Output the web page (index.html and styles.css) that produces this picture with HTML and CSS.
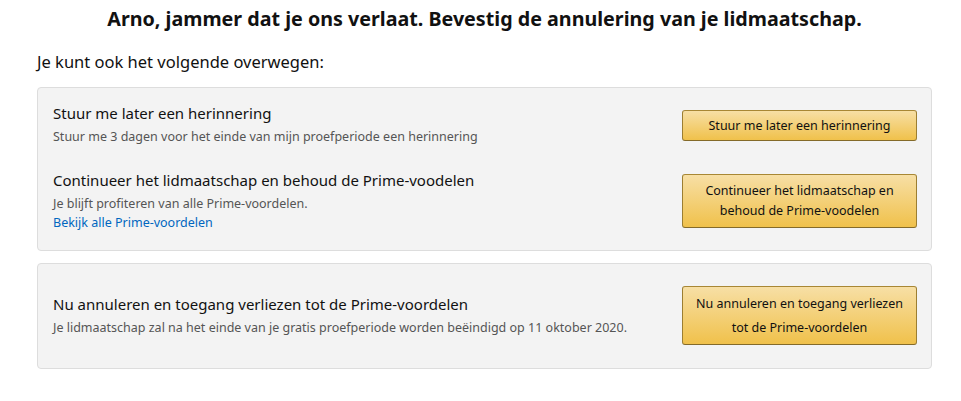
FILE: index.html
```html
<!DOCTYPE html>
<html lang="nl">
<head>
<meta charset="utf-8">
<link rel="stylesheet" href="styles.css">
</head>
<body>
<div class="page">
  <h1 class="title">Arno, jammer dat je ons verlaat. Bevestig de annulering van je lidmaatschap.</h1>
  <p class="intro">Je kunt ook het volgende overwegen:</p>
  <div class="box">
    <div class="row">
      <div class="text">
        <div class="head">Stuur me later een herinnering</div>
        <div class="sub">Stuur me 3 dagen voor het einde van mijn proefperiode een herinnering</div>
      </div>
      <button class="btn btn-one">Stuur me later een herinnering</button>
    </div>
    <div class="row">
      <div class="text">
        <div class="head">Continueer het lidmaatschap en behoud de Prime-voodelen</div>
        <div class="sub">Je blijft profiteren van alle Prime-voordelen.</div>
        <a class="link" href="#">Bekijk alle Prime-voordelen</a>
      </div>
      <button class="btn btn-two">Continueer het lidmaatschap en behoud de Prime-voodelen</button>
    </div>
  </div>
  <div class="box box-cancel">
    <div class="row">
      <div class="text">
        <div class="head">Nu annuleren en toegang verliezen tot de Prime-voordelen</div>
        <div class="sub">Je lidmaatschap zal na het einde van je gratis proefperiode worden beëindigd op 11 oktober 2020.</div>
      </div>
      <button class="btn btn-three">Nu annuleren en toegang verliezen tot de Prime-voordelen</button>
    </div>
  </div>
</div>
</body>
</html>
```

FILE: styles.css
```css
* { box-sizing: border-box; }
html, body { margin: 0; padding: 0; background: #fff; }
body {
  font-family: "Noto Sans", "Open Sans", sans-serif;
  color: #111;
}
.page {
  width: 895px;
  margin-left: 37px;
  padding-top: 5px;
}
.title {
  margin: 0;
  text-align: center;
  font-size: 19.7px;
  line-height: 28px;
  font-weight: 700;
}
.intro {
  margin: 19px 0 0;
  font-size: 16.5px;
  line-height: 20px;
}
.box {
  margin-top: 15px;
  background: #f3f3f3;
  border: 1px solid #dddddd;
  border-radius: 4px;
  padding: 15px 14px 18px 15px;
  display: flex;
  flex-direction: column;
  gap: 23px;
}
.box-cancel {
  margin-top: 12px;
  padding-top: 22px;
  padding-bottom: 23px;
}
.row {
  display: flex;
  align-items: center;
  justify-content: space-between;
}
.text { display: flex; flex-direction: column; }
.head {
  font-size: 15px;
  line-height: 20px;
}
.sub {
  font-size: 12.5px;
  line-height: 20px;
  color: #555;
  margin-top: 4px;
}
.link {
  font-size: 12.5px;
  line-height: 18px;
  color: #0066c0;
  text-decoration: none;
}
.btn {
  width: 235px;
  font-family: inherit;
  font-size: 12.5px;
  color: #111;
  border: 1px solid;
  border-color: #a88734 #9c7e31 #846a29;
  border-radius: 3px;
  background: linear-gradient(to bottom, #f7dfa5, #f0c14b);
  padding: 0 6px;
  text-align: center;
}
.btn-one { height: 31px; line-height: 29px; }
.btn-two { height: 54px; line-height: 20px; }
.btn-three { height: 59px; line-height: 24px; }
```
